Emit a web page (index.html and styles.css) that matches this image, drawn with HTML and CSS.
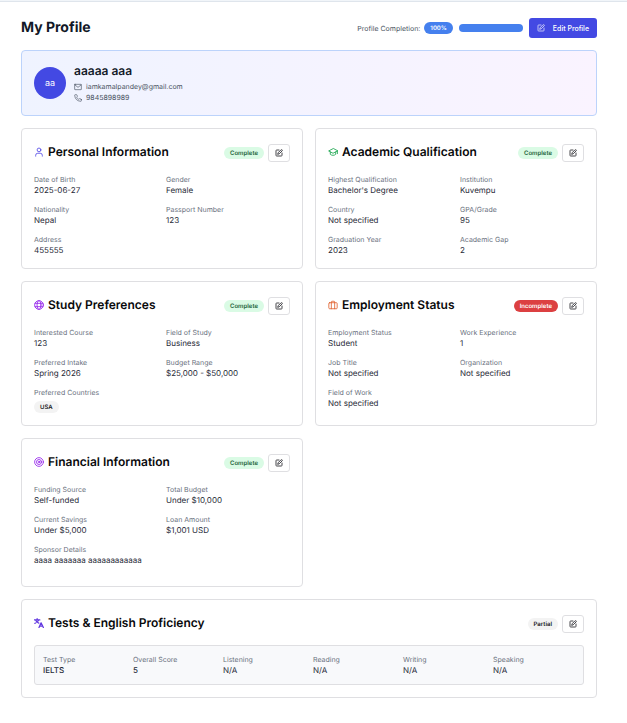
FILE: index.html
```html
<!DOCTYPE html>
<html lang="en">
<head>
<meta charset="utf-8">
<meta name="viewport" content="width=device-width, initial-scale=1">
<title>My Profile</title>
<link rel="stylesheet" href="styles.css">
</head>
<body>
<svg class="sprite" aria-hidden="true">
  <symbol id="edit" viewBox="0 0 24 24"><path d="M12 3H5a2 2 0 0 0-2 2v14a2 2 0 0 0 2 2h14a2 2 0 0 0 2-2v-7"/><path d="M18.4 2.6a2.1 2.1 0 0 1 3 3L12.4 14.6 8 16l1.4-4.4Z"/></symbol>
  <symbol id="mail" viewBox="0 0 24 24"><rect x="2" y="4" width="20" height="16" rx="1"/><path d="m3 6 9 7 9-7"/></symbol>
  <symbol id="phone" viewBox="0 0 24 24"><path d="M22 16.9v3a2 2 0 0 1-2.2 2A19.8 19.8 0 0 1 2.1 4.2 2 2 0 0 1 4.1 2h3a2 2 0 0 1 2 1.7c.1 1 .4 1.9.7 2.8a2 2 0 0 1-.5 2.1L8.1 9.9a16 16 0 0 0 6 6l1.3-1.3a2 2 0 0 1 2.1-.4c.9.3 1.8.6 2.8.7a2 2 0 0 1 1.7 2Z"/></symbol>
  <symbol id="user" viewBox="0 0 24 24"><circle cx="12" cy="7" r="4.5"/><path d="M4 22v-2a5 5 0 0 1 5-5h6a5 5 0 0 1 5 5v2"/></symbol>
  <symbol id="cap" viewBox="0 0 24 24"><path d="M12 4 1.5 9.5 12 15l10.5-5.5Z"/><path d="M5.5 12v5.5c3.5 3.3 9.5 3.3 13 0V12M22.5 9.5V16"/></symbol>
  <symbol id="globe" viewBox="0 0 24 24"><circle cx="12" cy="12" r="10.5"/><ellipse cx="12" cy="12" rx="4.8" ry="10.5"/><path d="M2.5 8h19M2.5 16h19"/></symbol>
  <symbol id="case" viewBox="0 0 24 24"><rect x="2" y="6.5" width="20" height="14.5" rx="2"/><path d="M8 21V4.5A1.5 1.5 0 0 1 9.5 3h5A1.5 1.5 0 0 1 16 4.5V21"/></symbol>
  <symbol id="target" viewBox="0 0 24 24"><circle cx="12" cy="12" r="10.5"/><circle cx="12" cy="12" r="6"/><circle cx="12" cy="12" r="1.8"/></symbol>
  <symbol id="translate" viewBox="0 0 24 24"><path d="M1 4.5h13M7.5 1.5v3M3.500 4.500c1.500 4 4 6.500 8 8M11.500 4.500c-1.500 4-4.500 7-9.500 8.500"/><path d="m12 23 5-11.500L22.500 23M14 19.500h7"/></symbol>
</svg>

<main class="page">
  <header class="page-header">
    <h1>My Profile</h1>
    <div class="header-actions">
      <div class="completion">
        <span class="completion-label" id="completion-label">Profile Completion:</span>
        <span class="badge badge-info">100%</span>
      </div>
      <div class="progress" role="progressbar" aria-labelledby="completion-label" aria-valuenow="100" aria-valuemin="0" aria-valuemax="100"><div class="progress-fill"></div></div>
      <button class="primary" type="button"><svg class="icon-sm"><use href="#edit"/></svg>Edit Profile</button>
    </div>
  </header>

  <section class="hero">
    <div class="avatar">aa</div>
    <div class="identity">
      <h2>aaaaa aaa</h2>
      <p class="contact"><svg class="icon-sm"><use href="#mail"/></svg>iamkamalpandey@gmail.com</p>
      <p class="contact"><svg class="icon-sm"><use href="#phone"/></svg>9845898989</p>
    </div>
  </section>

  <div class="cards">
    <section class="card">
      <header class="card-header">
        <h2 class="title"><svg class="icon indigo"><use href="#user"/></svg>Personal Information</h2>
        <span class="badge badge-success">Complete</span>
        <button class="edit" type="button" aria-label="Edit personal information"><svg class="icon-sm"><use href="#edit"/></svg></button>
      </header>
      <dl class="fields">
        <div><dt>Date of Birth</dt><dd>2025-06-27</dd></div>
        <div><dt>Gender</dt><dd>Female</dd></div>
        <div><dt>Nationality</dt><dd>Nepal</dd></div>
        <div><dt>Passport Number</dt><dd>123</dd></div>
        <div><dt>Address</dt><dd>455555</dd></div>
      </dl>
    </section>

    <section class="card">
      <header class="card-header">
        <h2 class="title"><svg class="icon green"><use href="#cap"/></svg>Academic Qualification</h2>
        <span class="badge badge-success">Complete</span>
        <button class="edit" type="button" aria-label="Edit academic qualification"><svg class="icon-sm"><use href="#edit"/></svg></button>
      </header>
      <dl class="fields">
        <div><dt>Highest Qualification</dt><dd>Bachelor's Degree</dd></div>
        <div><dt>Institution</dt><dd>Kuvempu</dd></div>
        <div><dt>Country</dt><dd>Not specified</dd></div>
        <div><dt>GPA/Grade</dt><dd>95</dd></div>
        <div><dt>Graduation Year</dt><dd>2023</dd></div>
        <div><dt>Academic Gap</dt><dd>2</dd></div>
      </dl>
    </section>

    <section class="card">
      <header class="card-header">
        <h2 class="title"><svg class="icon purple"><use href="#globe"/></svg>Study Preferences</h2>
        <span class="badge badge-success">Complete</span>
        <button class="edit" type="button" aria-label="Edit study preferences"><svg class="icon-sm"><use href="#edit"/></svg></button>
      </header>
      <dl class="fields">
        <div><dt>Interested Course</dt><dd>123</dd></div>
        <div><dt>Field of Study</dt><dd>Business</dd></div>
        <div><dt>Preferred Intake</dt><dd>Spring 2026</dd></div>
        <div><dt>Budget Range</dt><dd>$25,000 - $50,000</dd></div>
        <div><dt>Preferred Countries</dt><dd class="tags"><span class="badge badge-neutral">USA</span></dd></div>
      </dl>
    </section>

    <section class="card">
      <header class="card-header">
        <h2 class="title"><svg class="icon orange"><use href="#case"/></svg>Employment Status</h2>
        <span class="badge badge-danger">Incomplete</span>
        <button class="edit" type="button" aria-label="Edit employment status"><svg class="icon-sm"><use href="#edit"/></svg></button>
      </header>
      <dl class="fields">
        <div><dt>Employment Status</dt><dd>Student</dd></div>
        <div><dt>Work Experience</dt><dd>1</dd></div>
        <div><dt>Job Title</dt><dd>Not specified</dd></div>
        <div><dt>Organization</dt><dd>Not specified</dd></div>
        <div><dt>Field of Work</dt><dd>Not specified</dd></div>
      </dl>
    </section>

    <section class="card">
      <header class="card-header">
        <h2 class="title"><svg class="icon purple"><use href="#target"/></svg>Financial Information</h2>
        <span class="badge badge-success">Complete</span>
        <button class="edit" type="button" aria-label="Edit financial information"><svg class="icon-sm"><use href="#edit"/></svg></button>
      </header>
      <dl class="fields with-notes">
        <div><dt>Funding Source</dt><dd>Self-funded</dd></div>
        <div><dt>Total Budget</dt><dd>Under $10,000</dd></div>
        <div><dt>Current Savings</dt><dd>Under $5,000</dd></div>
        <div><dt>Loan Amount</dt><dd>$1,001 USD</dd></div>
        <div><dt>Sponsor Details</dt><dd>aaaa aaaaaaa aaaaaaaaaaaa</dd></div>
      </dl>
    </section>

    <section class="card wide">
      <header class="card-header">
        <h2 class="title"><svg class="icon violet"><use href="#translate"/></svg>Tests &amp; English Proficiency</h2>
        <span class="badge badge-neutral">Partial</span>
        <button class="edit" type="button" aria-label="Edit tests"><svg class="icon-sm"><use href="#edit"/></svg></button>
      </header>
      <dl class="fields scores">
        <div><dt>Test Type</dt><dd class="strong">IELTS</dd></div>
        <div><dt>Overall Score</dt><dd class="strong">5</dd></div>
        <div><dt>Listening</dt><dd>N/A</dd></div>
        <div><dt>Reading</dt><dd>N/A</dd></div>
        <div><dt>Writing</dt><dd>N/A</dd></div>
        <div><dt>Speaking</dt><dd>N/A</dd></div>
      </dl>
    </section>
  </div>
</main>
</body>
</html>
```
FILE: styles.css
```css
* {
  box-sizing: border-box;
  margin: 0;
  padding: 0;
}

body {
  font: 400 8px/11px Inter, "Liberation Sans", sans-serif;
  text-rendering: geometricPrecision;
  color: #1f2937;
  background: #fff;
  border-top: 1px solid #f1f5f9;
}

.sprite {
  display: none;
}

svg {
  display: block;
  flex: none;
  fill: none;
  stroke: currentColor;
  stroke-width: 2;
  stroke-linecap: round;
  stroke-linejoin: round;
}

.icon {
  width: 10px;
  height: 10px;
}

.icon-sm {
  width: 8px;
  height: 8px;
}

button {
  font: inherit;
  display: flex;
  align-items: center;
  justify-content: center;
}

.page {
  border-top: 1px solid #dfe5ec;
  padding: 16px 30px 24px 21px;
}

.page-header {
  display: flex;
  align-items: center;
  justify-content: space-between;
  margin-bottom: 12px;
}

h1 {
  font-size: 14px;
  line-height: 20px;
  font-weight: 700;
  color: #111827;
}

.header-actions {
  display: flex;
  align-items: center;
  gap: 6px;
}

.completion {
  display: flex;
  align-items: center;
  gap: 4px;
}

.completion-label {
  font-size: 7px;
  line-height: 11px;
  color: #4b5563;
}

.progress {
  width: 64px;
  height: 8px;
  border-radius: 4px;
  background: #dbeafe;
  overflow: hidden;
}

.progress-fill {
  height: 100%;
  background: #4580ee;
}

.primary {
  height: 20px;
  padding: 0 8px;
  gap: 8px;
  border: 0;
  border-radius: 3px;
  background: #4349e3;
  color: #fff;
  font-size: 7px;
  font-weight: 500;
}

.hero {
  display: flex;
  align-items: center;
  gap: 8px;
  padding: 12px;
  margin-bottom: 12px;
  border: 1px solid #bcd3fb;
  border-radius: 4px;
  background: linear-gradient(90deg, #eff3ff, #faf3ff);
}

.avatar {
  display: flex;
  align-items: center;
  justify-content: center;
  width: 32px;
  height: 32px;
  border-radius: 50%;
  background: #4349e3;
  color: #fff;
  font-size: 9px;
}

h2 {
  font-size: 12px;
  line-height: 16px;
  font-weight: 600;
  color: #111827;
}

.identity h2 {
  margin-bottom: 2px;
}

.contact {
  display: flex;
  align-items: center;
  gap: 4px;
  font-size: 7px;
  line-height: 11px;
  color: #4b5563;
}

.cards {
  display: grid;
  grid-template-columns: 1fr 1fr;
  gap: 12px;
}

.card {
  padding: 15px 12px 12px;
  border: 1px solid #dfdfe2;
  border-radius: 4px;
}

.wide {
  grid-column: 1 / -1;
}

.card-header {
  display: flex;
  align-items: center;
  gap: 4px;
  margin-bottom: 12px;
}

.title {
  display: flex;
  align-items: center;
  align-self: flex-start;
  gap: 4px;
  margin-right: auto;
  color: #09090b;
}

.badge {
  display: inline-flex;
  align-items: center;
  height: 12px;
  padding: 0 6px;
  border-radius: 6px;
  font-size: 6px;
  line-height: 9px;
  font-weight: 600;
}

.badge-info {
  background: #4580ee;
  color: #fff;
}

.badge-success {
  background: #dafbe5;
  color: #24653b;
}

.badge-danger {
  background: #dc4041;
  color: #fff;
}

.badge-neutral {
  background: #f3f3f3;
  color: #18181b;
}

.edit {
  width: 22px;
  height: 18px;
  border: 1px solid #dfdfe2;
  border-radius: 3px;
  background: #fff;
  color: #46464b;
}

.fields {
  display: grid;
  grid-template-columns: 1fr 1fr;
  gap: 8px;
}

.with-notes {
  padding-bottom: 8px;
}

dt {
  font-size: 7px;
  line-height: 11px;
  color: #6b7280;
}

.tags {
  display: flex;
  gap: 4px;
  padding-top: 3px;
}

.strong {
  font-weight: 500;
}

.scores {
  grid-template-columns: repeat(6, 1fr);
  padding: 8px;
  border: 1px solid #dfdfe2;
  border-radius: 3px;
  background: #f8f9fb;
}

.edit .icon-sm {
  stroke-width: 3;
}

.indigo { color: #4f46e5; }
.green { color: #16a34a; }
.purple { color: #9320ea; }
.orange { color: #e0602c; }

.violet {
  color: #6238e0;
  stroke-width: 3;
}
```
